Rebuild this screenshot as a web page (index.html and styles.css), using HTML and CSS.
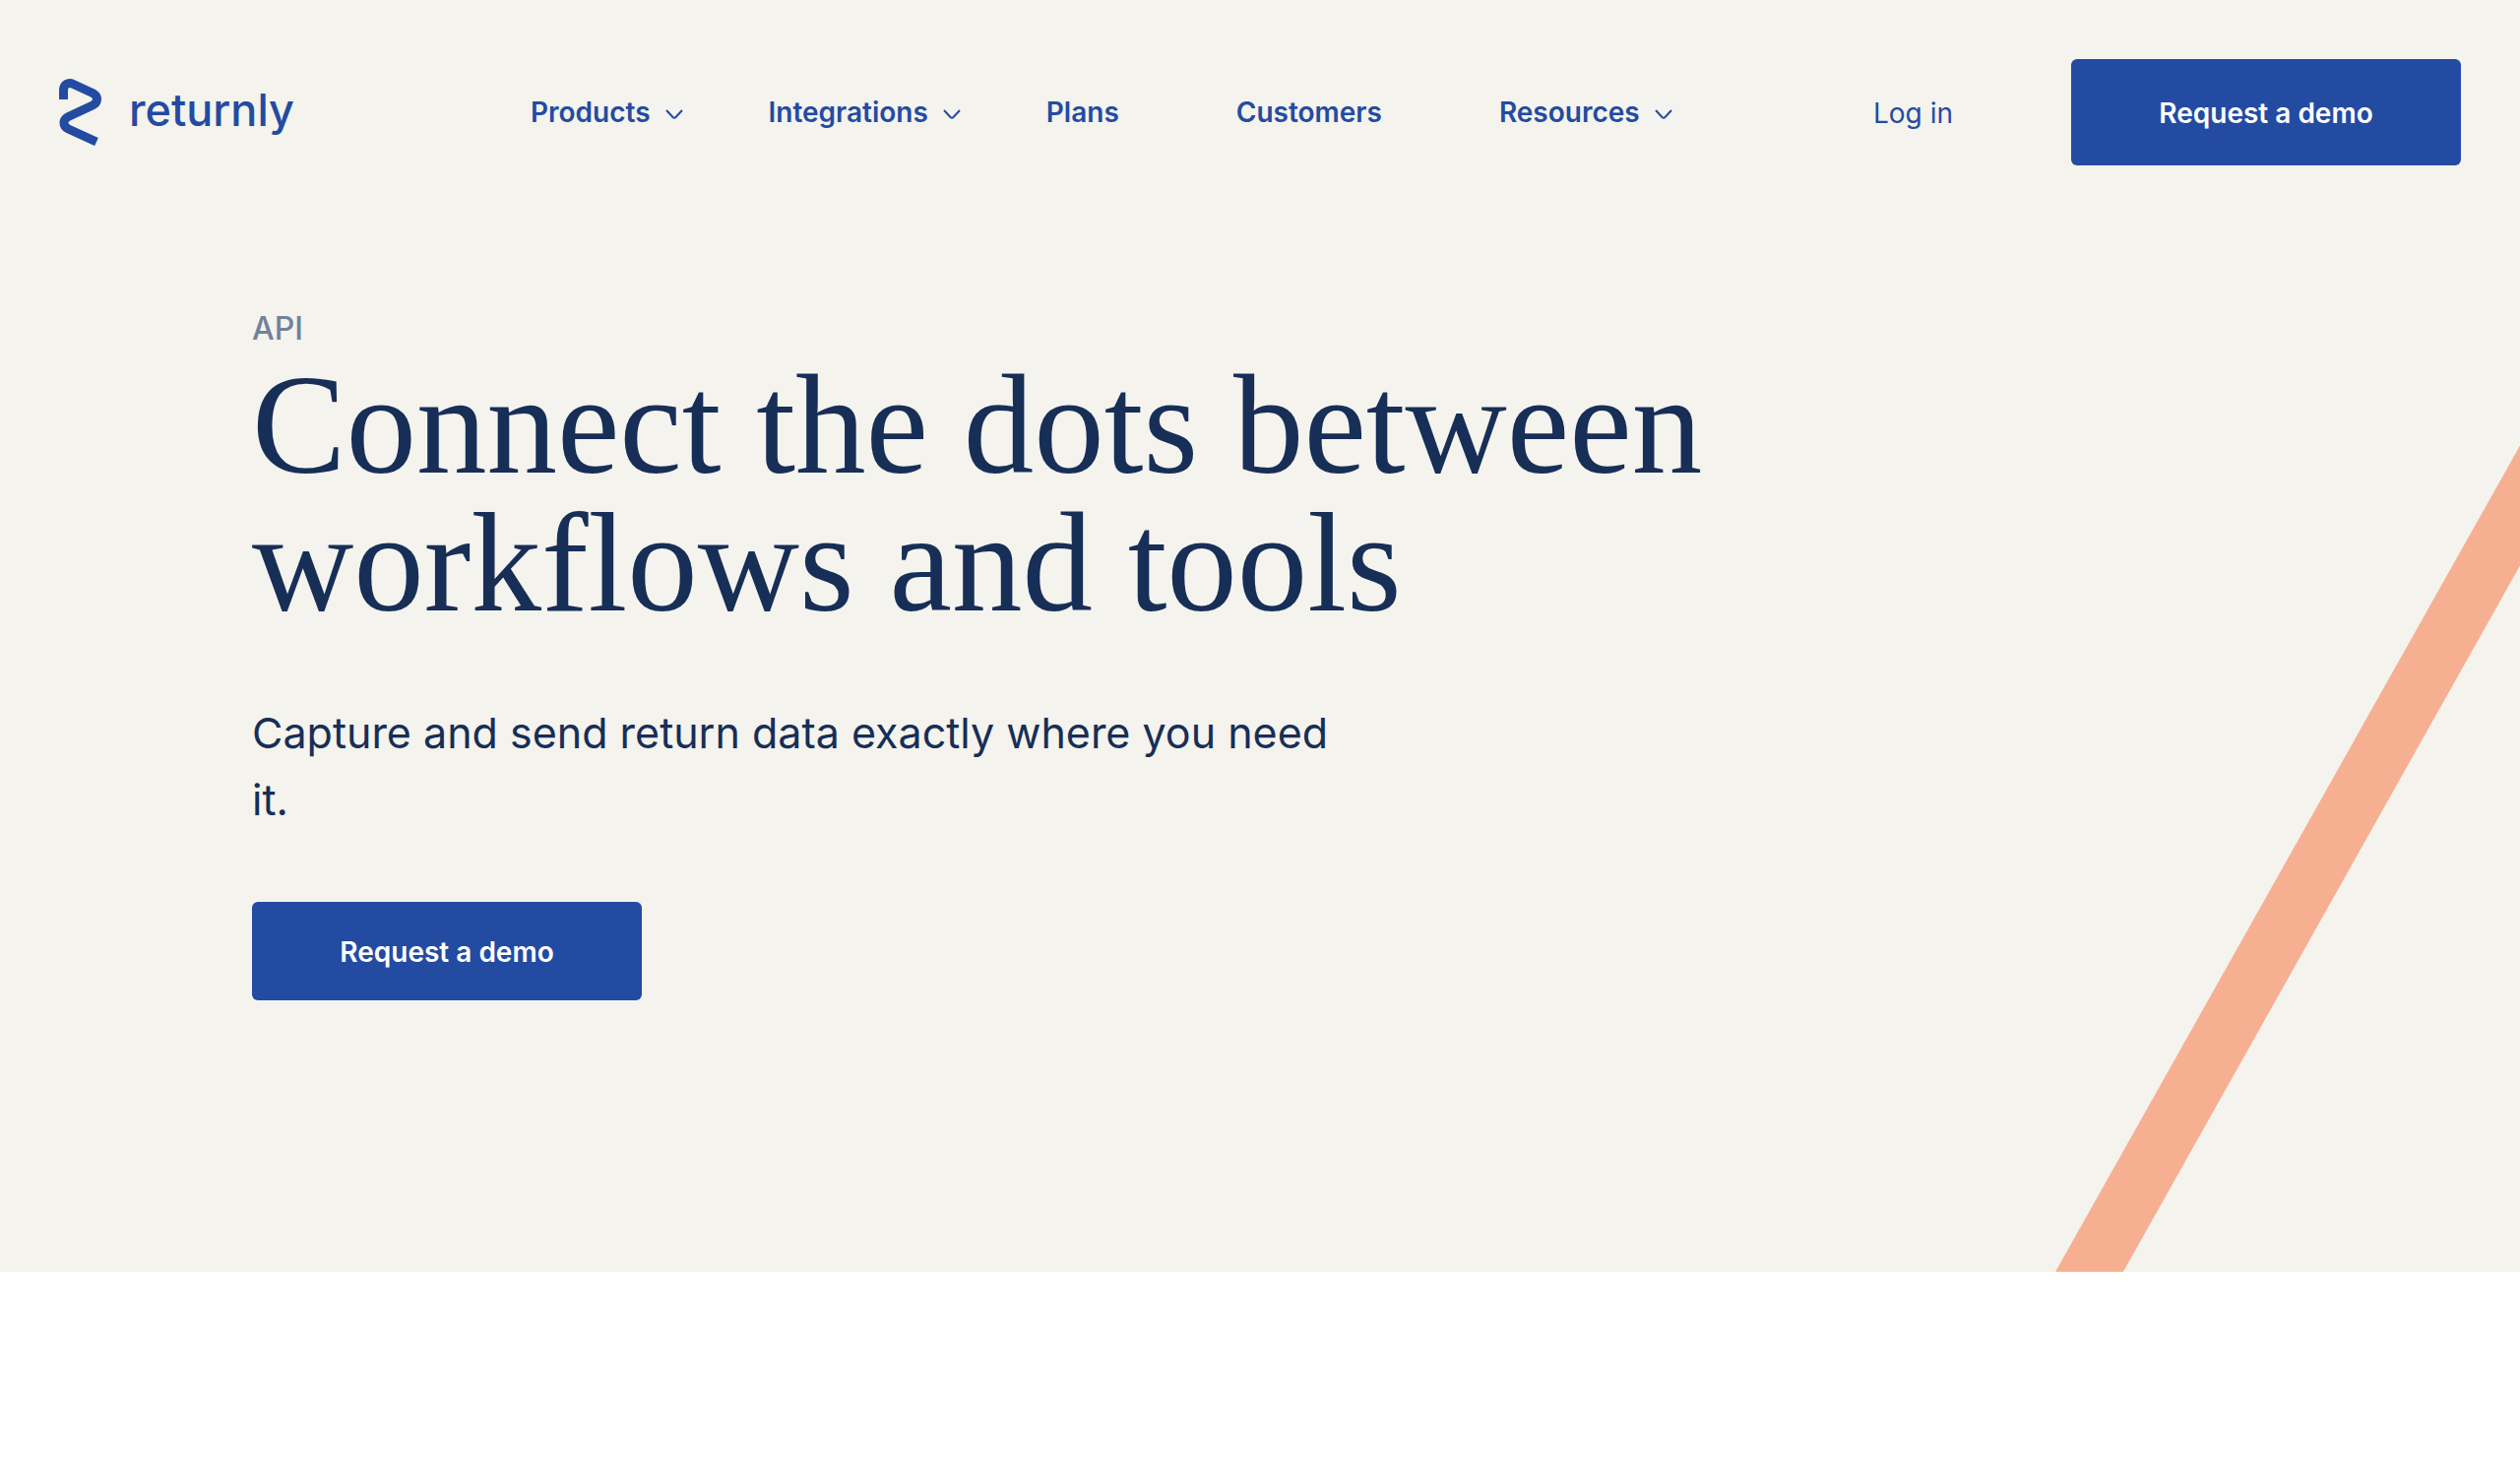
FILE: index.html
```html
<!DOCTYPE html>
<html lang="en">
<head>
    <meta charset="UTF-8">
    <meta name="viewport" content="width=device-width, initial-scale=1.0">
    <title>Returnly API</title>
    <link rel="stylesheet" href="styles.css">
</head>

<body>
    <div class="hero">
        <!-- Diagonal stripe -->
        <svg class="stripe" viewBox="0 0 473 841" aria-hidden="true">
            <polygon points="473,0 473,122 69,841 0,841" fill="#f7af92"/>
        </svg>

        <!-- Header -->
        <header class="header">
            <a class="logo" href="#">
                <svg class="logo-mark" viewBox="0 0 43 68" aria-hidden="true">
                    <path d="M4.500 21V12C4.500 6 9 3 14.500 5.500L34 14.500C40 17.500 40 24 34 27L9.500 38.500C3.500 41.500 3.500 48 9.500 51L38 64" fill="none" stroke="#234ba2" stroke-width="9"/>
                </svg>
                <span class="logo-text">returnly</span>
            </a>

            <nav class="nav">
                <button class="nav-item" type="button">Products
                    <svg class="arrow" viewBox="0 0 18 10" aria-hidden="true"><path d="M1 1L7.500 8Q9 9.500 10.500 8L17 1"/></svg>
                </button>
                <button class="nav-item" type="button">Integrations
                    <svg class="arrow" viewBox="0 0 18 10" aria-hidden="true"><path d="M1 1L7.500 8Q9 9.500 10.500 8L17 1"/></svg>
                </button>
                <a class="nav-item nav-link" href="#">Plans</a>
                <a class="nav-item nav-link" href="#">Customers</a>
                <button class="nav-item" type="button">Resources
                    <svg class="arrow" viewBox="0 0 18 10" aria-hidden="true"><path d="M1 1L7.500 8Q9 9.500 10.500 8L17 1"/></svg>
                </button>
            </nav>

            <div class="actions">
                <a class="login" href="#">Log in</a>
                <a class="btn btn-tall" href="#">Request a demo</a>
            </div>
        </header>

        <!-- Hero content -->
        <main class="content">
            <p class="eyebrow">API</p>
            <h1>Connect the dots between workflows and tools</h1>
            <p class="lead">Capture and send return data exactly where you need it.</p>
            <a class="btn" href="#">Request a demo</a>
        </main>
    </div>
</body>
</html>
```

FILE: styles.css
```css
* {
    box-sizing: border-box;
}

body {
    margin: 0;
    background: #fff;
    color: #172e57;
    font-family: Inter, "Liberation Sans", sans-serif;
}

a {
    text-decoration: none;
}

.hero {
    position: relative;
    overflow: hidden;
    padding-bottom: 276px;
    background: #f4f3ed;
}

/* Decorative stripe behind the hero text */
.stripe {
    position: absolute;
    right: 0;
    bottom: 0;
    height: 65%;
}

.header {
    position: relative;
    display: flex;
    align-items: center;
    padding: 60px;
}

.logo {
    display: flex;
    align-items: center;
    gap: 28px;
    color: #234ba2;
}

.logo-mark {
    width: 43px;
    height: 68px;
}

.logo-text {
    padding-bottom: 4px;
    font-size: 45px;
    font-weight: 500;
    line-height: 60px;
}

.nav {
    display: flex;
    align-items: center;
    gap: 87px;
    margin-left: 240px;
}

.nav-item {
    display: flex;
    align-items: center;
    gap: 15px;
    padding: 0;
    border: none;
    background: none;
    color: #234ba2;
    font-family: inherit;
    font-size: 28px;
    font-weight: 600;
    line-height: 40px;
    cursor: pointer;
}

.nav-link {
    padding-right: 32px;
}

.arrow {
    width: 18px;
    height: 10px;
    margin-top: 4px;
    fill: none;
    stroke: #234ba2;
    stroke-width: 2;
}

.actions {
    display: flex;
    align-items: center;
    gap: 120px;
    margin-left: auto;
}

.login {
    padding-top: 2px;
    color: #234ba2;
    font-size: 28px;
    line-height: 40px;
}

.btn {
    display: inline-block;
    min-width: 396px;
    padding: 31px 60px 29px;
    border-radius: 6px;
    background: #234ba2;
    color: #fff;
    font-size: 28px;
    font-weight: 600;
    line-height: 40px;
    text-align: center;
}

.btn-tall {
    padding: 35px 60px 33px;
}

.content {
    position: relative;
    padding: 86px 10% 0;
}

.eyebrow {
    margin: 0;
    color: #72819b;
    font-size: 32px;
    font-weight: 500;
    line-height: 40px;
}

h1 {
    max-width: 1540px;
    margin: 8px 0 0;
    font-family: "Liberation Serif", serif;
    font-size: 143px;
    font-weight: 400;
    line-height: 140px;
}

.lead {
    max-width: 1120px;
    margin: 68px 0 70px;
    font-size: 43px;
    line-height: 68px;
}
```
